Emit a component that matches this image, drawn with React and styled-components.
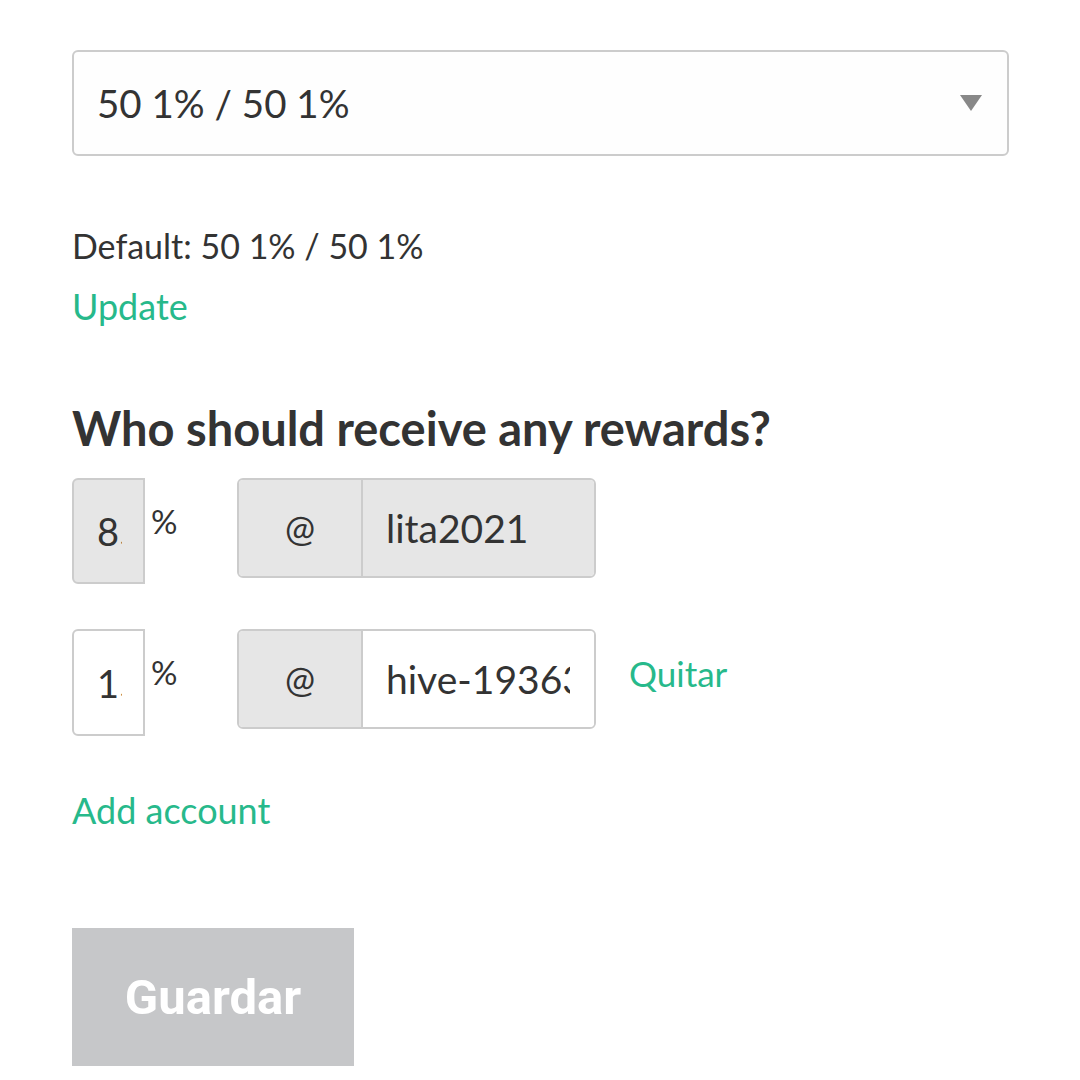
import React from "react";
import styled, { createGlobalStyle } from "styled-components";

const Global = createGlobalStyle`
  html, body { margin: 0; padding: 0; background: #fff; }
  body { font-family: "Lato", "Noto Sans", sans-serif; color: #333; }
  * { box-sizing: border-box; }
`;

const Page = styled.div`
  padding: 50px 0 0 72px;
  width: 1080px;
  height: 1080px;
  overflow: hidden;
`;

const Select = styled.div`
  width: 937px;
  height: 106px;
  border: 2px solid #cccccc;
  border-radius: 6px;
  background: #fefefe;
  display: flex;
  align-items: center;
  justify-content: space-between;
  padding: 0 25px 0 23px;
  font-size: 38.5px;
  color: #333;
`;

const Caret = styled.svg`
  width: 22px;
  height: 16px;
  display: block;
`;

const Line = styled.div`
  font-size: ${(p) => (p.$link ? 36 : 34)}px;
  line-height: 60px;
  color: ${(p) => (p.$link ? "#27b98b" : "#333")};
  margin-top: ${(p) => p.$mt || 0}px;
`;

const Heading = styled.h2`
  margin: 62px 0 20px;
  font-size: 47px;
  line-height: 60px;
  font-weight: 700;
  color: #333;
`;

const Row = styled.div`
  display: flex;
  align-items: flex-start;
  margin-bottom: ${(p) => p.$mb || 0}px;
`;

const PctInput = styled.input`
  width: 73px;
  height: ${(p) => p.$h}px;
  border: 2px solid #cccccc;
  border-radius: 6px 0 0 6px;
  background: ${(p) => (p.$disabled ? "#e6e6e6" : "#fff")};
  padding: 0 21px 0 23px;
  font-family: "Lato", "Noto Sans", sans-serif;
  font-size: 38px;
  color: #333;
  outline: none;
`;

const Pct = styled.span`
  width: 92px;
  padding: 25px 0 0 6px;
  font-size: 33px;
  line-height: 36px;
  color: #333;
`;

const Group = styled.div`
  display: flex;
  width: 359px;
  height: 100px;
  border: 2px solid #cccccc;
  border-radius: 6px;
  overflow: hidden;
`;

const Addon = styled.div`
  width: 124px;
  background: #e6e6e6;
  border-right: 2px solid #cccccc;
  display: flex;
  align-items: center;
  justify-content: center;
  font-size: 36px;
  color: #333;
`;

const NameInput = styled.input`
  flex: 1;
  min-width: 0;
  border: none;
  background: ${(p) => (p.$disabled ? "#e6e6e6" : "#fff")};
  padding: 0 24px 0 23px;
  font-family: "Lato", "Noto Sans", sans-serif;
  font-size: 39px;
  color: #333;
  outline: none;
`;

const Quitar = styled.a`
  margin: 20px 0 0 33px;
  font-size: 35px;
  line-height: 48px;
  color: #27b98b;
  cursor: pointer;
`;

const Button = styled.button`
  margin-top: 88px;
  width: 282px;
  height: 138px;
  border: none;
  background: #c6c7c9;
  color: #fff;
  font-family: "Roboto", sans-serif;
  font-weight: 700;
  font-size: 49px;
`;

export default function App() {
  return (
    <>
      <Global />
      <Page>
        <Select>
          <span>50 1% / 50 1%</span>
          <Caret viewBox="0 0 22 16">
            <path d="M0 0 H22 L11 16 Z" fill="#888" />
          </Caret>
        </Select>
        <Line $mt={60}>Default: 50 1% / 50 1%</Line>
        <Line $link>Update</Line>
        <Heading>Who should receive any rewards?</Heading>
        <Row $mb={45}>
          <PctInput $h={106} $disabled readOnly value="85" />
          <Pct>%</Pct>
          <Group>
            <Addon>@</Addon>
            <NameInput $disabled readOnly value="lita2021" />
          </Group>
        </Row>
        <Row>
          <PctInput $h={107} readOnly value="15" />
          <Pct>%</Pct>
          <Group>
            <Addon>@</Addon>
            <NameInput readOnly value="hive-193631" />
          </Group>
          <Quitar>Quitar</Quitar>
        </Row>
        <Line $link $mt={44}>Add account</Line>
        <Button>Guardar</Button>
      </Page>
    </>
  );
}
